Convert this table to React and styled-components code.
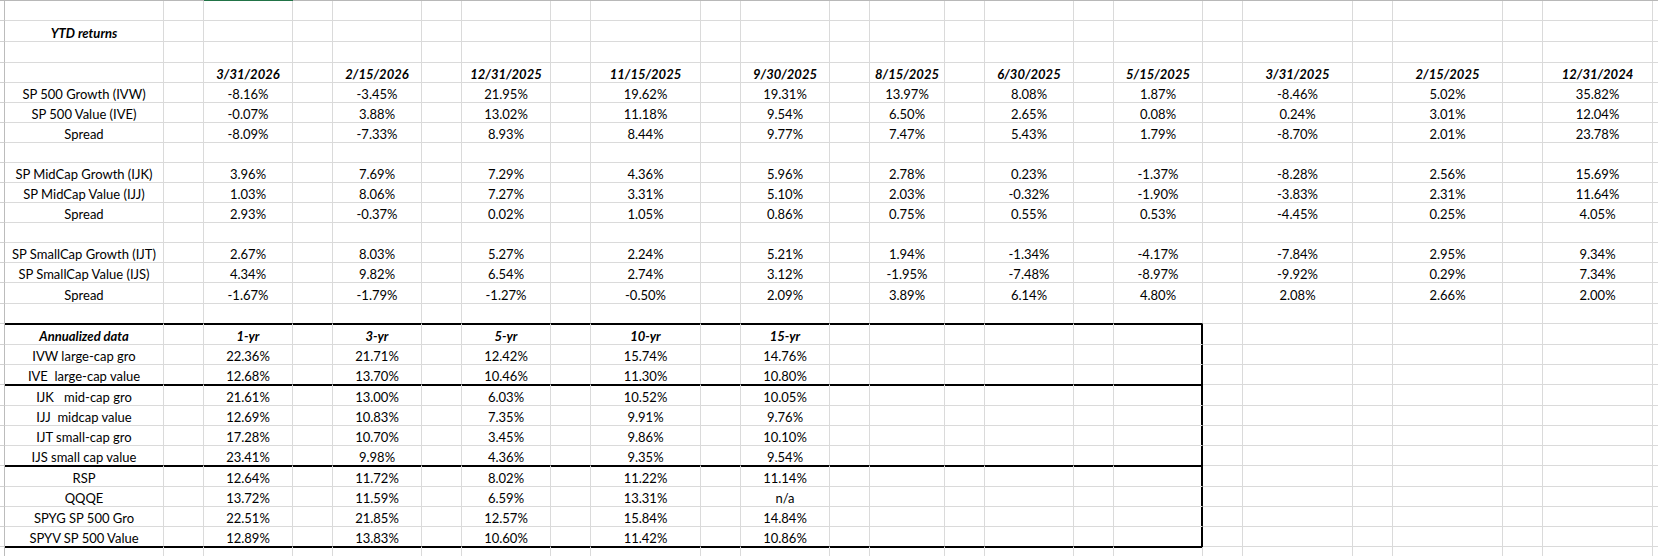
import React from "react";
import styled, { createGlobalStyle } from "styled-components";

const GlobalStyle = createGlobalStyle`
  html, body {
    margin: 0;
    padding: 0;
    background: #ffffff;
    overflow: hidden;
  }
`;

/* column widths: row-header stub, A..W, then the cut-off X */
const COLS = "5px 159px 40px 89px 40px 89px 40px 89px 40px 110px 40px 89px 40px 75px 40px 89px 40px 89px 40px 110px 40px 110px 40px 110px 1fr";
const NCOLS = 24; // stub + A..W (X is the filler)
const BOX_LAST = 17; // column Q
const GRID = "#dadada";

/* row heights (rows 1..27), from the gridlines in the sheet */
const HEIGHTS = [20, 21, 21, 20, 20, 20, 20, 20, 20, 20, 20, 20, 20, 20, 21, 20, 21, 20, 20, 21, 20, 20, 20, 21, 20, 20, 20];

const DATES = ["3/31/2026", "2/15/2026", "12/31/2025", "11/15/2025", "9/30/2025", "8/15/2025", "6/30/2025", "5/15/2025", "3/31/2025", "2/15/2025", "12/31/2024"];

const YTD = [
  ["SP 500 Growth (IVW)", "-8.16%", "-3.45%", "21.95%", "19.62%", "19.31%", "13.97%", "8.08%", "1.87%", "-8.46%", "5.02%", "35.82%"],
  ["SP 500 Value (IVE)", "-0.07%", "3.88%", "13.02%", "11.18%", "9.54%", "6.50%", "2.65%", "0.08%", "0.24%", "3.01%", "12.04%"],
  ["Spread", "-8.09%", "-7.33%", "8.93%", "8.44%", "9.77%", "7.47%", "5.43%", "1.79%", "-8.70%", "2.01%", "23.78%"],
  null,
  ["SP MidCap Growth (IJK)", "3.96%", "7.69%", "7.29%", "4.36%", "5.96%", "2.78%", "0.23%", "-1.37%", "-8.28%", "2.56%", "15.69%"],
  ["SP MidCap Value (IJJ)", "1.03%", "8.06%", "7.27%", "3.31%", "5.10%", "2.03%", "-0.32%", "-1.90%", "-3.83%", "2.31%", "11.64%"],
  ["Spread", "2.93%", "-0.37%", "0.02%", "1.05%", "0.86%", "0.75%", "0.55%", "0.53%", "-4.45%", "0.25%", "4.05%"],
  null,
  ["SP SmallCap Growth (IJT)", "2.67%", "8.03%", "5.27%", "2.24%", "5.21%", "1.94%", "-1.34%", "-4.17%", "-7.84%", "2.95%", "9.34%"],
  ["SP SmallCap Value (IJS)", "4.34%", "9.82%", "6.54%", "2.74%", "3.12%", "-1.95%", "-7.48%", "-8.97%", "-9.92%", "0.29%", "7.34%"],
  ["Spread", "-1.67%", "-1.79%", "-1.27%", "-0.50%", "2.09%", "3.89%", "6.14%", "4.80%", "2.08%", "2.66%", "2.00%"],
];

const ANNUAL = [
  ["IVW large-cap gro", "22.36%", "21.71%", "12.42%", "15.74%", "14.76%"],
  ["IVE  large-cap value", "12.68%", "13.70%", "10.46%", "11.30%", "10.80%"],
  ["IJK   mid-cap gro", "21.61%", "13.00%", "6.03%", "10.52%", "10.05%"],
  ["IJJ  midcap value", "12.69%", "10.83%", "7.35%", "9.91%", "9.76%"],
  ["IJT small-cap gro", "17.28%", "10.70%", "3.45%", "9.86%", "10.10%"],
  ["IJS small cap value", "23.41%", "9.98%", "4.36%", "9.35%", "9.54%"],
  ["RSP", "12.64%", "11.72%", "8.02%", "11.22%", "11.14%"],
  ["QQQE", "13.72%", "11.59%", "6.59%", "13.31%", "n/a"],
  ["SPYG SP 500 Gro", "22.51%", "21.85%", "12.57%", "15.84%", "14.84%"],
  ["SPYV SP 500 Value", "12.89%", "13.83%", "10.60%", "11.42%", "10.86%"],
];

/* value cells sit in every other column: C, E, G ... */
const spread = (label, values, bold) => {
  const cells = Array(NCOLS).fill(null);
  if (label != null) cells[1] = { text: label, bold };
  values.forEach((v, i) => {
    cells[3 + i * 2] = { text: v, bold };
  });
  return cells;
};

const buildRows = () => {
  const rows = [];
  rows.push(spread(null, []));
  rows.push(spread("YTD returns", [], true));
  rows.push(spread(null, []));
  rows.push(spread(null, DATES, true));
  YTD.forEach((r) => rows.push(r ? spread(r[0], r.slice(1)) : spread(null, [])));
  rows.push(spread(null, []));
  rows.push(spread("Annualized data", ["1-yr", "3-yr", "5-yr", "10-yr", "15-yr"], true));
  ANNUAL.forEach((r) => rows.push(spread(r[0], r.slice(1))));
  return rows;
};

/* rows (1-based) that start a boxed section / the row closing the box */
const BOX_TOPS = [17, 20, 24, 28];
const BOX_FIRST_ROW = 17;
const BOX_LAST_ROW = 27;

const Sheet = styled.div`
  display: flex;
  flex-direction: column;
  width: 1658px;
  height: 556px;
  overflow: hidden;
  font-family: Lato, "Liberation Sans", sans-serif;
  font-size: 13px;
  color: #000;
`;

const HeaderEdge = styled.div`
  display: grid;
  grid-template-columns: ${COLS};
  height: 1px;
  flex: none;
  background: #b8b8b8;
`;

const EdgeMark = styled.div`
  background: ${(p) => (p.$active ? "#217346" : "transparent")};
`;

const Row = styled.div`
  display: grid;
  grid-template-columns: ${COLS};
  height: ${(p) => p.$h}px;
  flex: none;
`;

const Stub = styled.div`
  box-sizing: border-box;
  border-right: 1px solid #bcbcbc;
  border-bottom: 1px solid #d2d2d2;
  background: #ffffff;
`;

const Cell = styled.div`
  box-sizing: border-box;
  display: flex;
  align-items: flex-end;
  justify-content: center;
  min-width: 0;
  border-right: 1px solid ${(p) => (p.$boxRight ? "#000" : GRID)};
  border-bottom: 1px solid ${(p) => (p.$boxBottom ? "#000" : GRID)};
  box-shadow: ${(p) => {
    const s = [];
    if (p.$boxTop) s.push("inset 0 1px 0 #000");
    if (p.$boxRight) s.push("inset -1px 0 0 #000");
    return s.length ? s.join(", ") : "none";
  }};
  line-height: 16px;
  white-space: pre;
  overflow: visible;
  font-weight: ${(p) => (p.$bold ? 700 : 400)};
  font-style: ${(p) => (p.$bold ? "italic" : "normal")};
`;

const Filler = styled.div`
  box-sizing: border-box;
  border-bottom: 1px solid ${GRID};
`;

const App = () => {
  const rows = buildRows();

  const renderRow = (cells, r, h) => (
    <Row key={r} $h={h}>
      <Stub />
      {cells.slice(1).map((c, i) => {
        const col = i + 1;
        const inBox = col <= BOX_LAST;
        return (
          <Cell
            key={col}
            $bold={c && c.bold}
            $boxTop={inBox && BOX_TOPS.includes(r)}
            $boxBottom={inBox && BOX_TOPS.includes(r + 1)}
            $boxRight={col === BOX_LAST && r >= BOX_FIRST_ROW && r <= BOX_LAST_ROW}
          >
            {c ? c.text : ""}
          </Cell>
        );
      })}
      <Filler />
    </Row>
  );

  return (
    <>
      <GlobalStyle />
      <Sheet>
        <HeaderEdge>
          {Array.from({ length: NCOLS + 1 }, (_, i) => (
            <EdgeMark key={i} $active={i === 3} />
          ))}
        </HeaderEdge>
        {rows.map((cells, i) => renderRow(cells, i + 1, HEIGHTS[i]))}
        {renderRow(Array(NCOLS).fill(null), 28, 20)}
      </Sheet>
    </>
  );
};

export default App;
